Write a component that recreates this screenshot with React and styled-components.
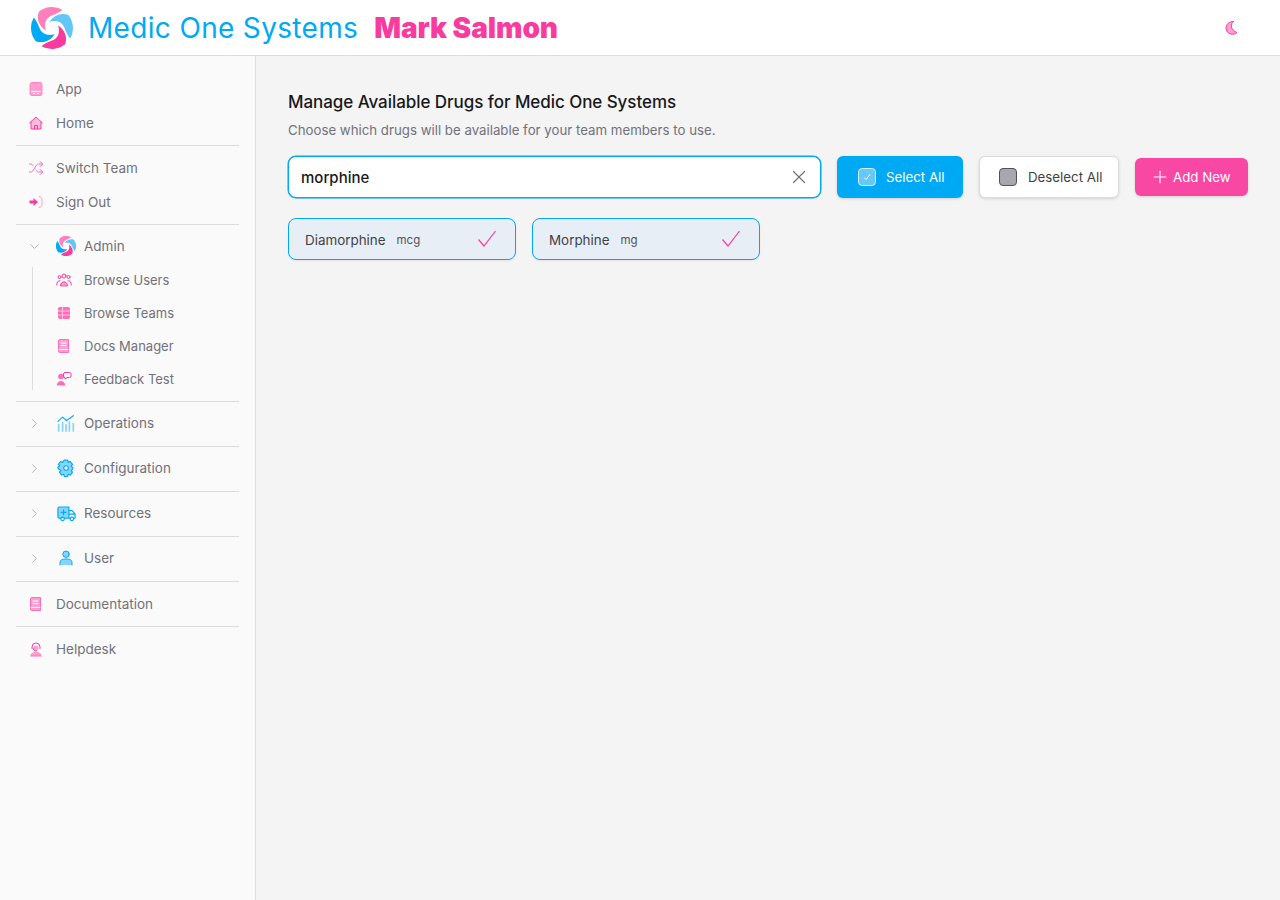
import { useState } from "react";
import styled, { createGlobalStyle } from "styled-components";
import { ChevronDown, ChevronRight, Plus, Shuffle, X } from "lucide-react";

const PINK = "#f93ba0";
const PINK_SOFT = "#ff9fcf";
const BLUE = "#00a9f4";
const BLUE_SOFT = "#86d4fa";

const GlobalStyle = createGlobalStyle`
  * { box-sizing: border-box; }
  html, body { margin: 0; height: 100%; }
  body {
    font-family: Inter, "Noto Sans", "Liberation Sans", sans-serif;
    background: #f4f4f5;
    color: #18181b;
  }
`;

const Swirl = ({ size }) => (
  <svg width={size} height={size} viewBox="0 0 48 48">
    {[
      ["#ff7fbd", 0],
      ["#62c6f8", 90],
      [PINK, 180],
      [BLUE, 270],
    ].map(([fill, angle]) => (
      <path
        key={angle}
        fill={fill}
        transform={`rotate(${angle} 24 24)`}
        d="M36 3.200A24 24 0 0 0 9 5.300C6 13 9 22 17 27 14.500 19 17 12 24.500 9.500 28.500 8 33 6 36 3.200Z"
      />
    ))}
  </svg>
);

const Glyph = styled.svg.attrs({ viewBox: "0 0 16 16", fill: "none" })`
  width: ${(p) => p.$size || 16}px;
  height: ${(p) => p.$size || 16}px;
  flex: none;
  color: ${(p) => (p.$blue ? BLUE : PINK)};
  .soft { fill: ${(p) => (p.$blue ? BLUE_SOFT : PINK_SOFT)}; }
  .strong { fill: #ff6db8; }
  .line { stroke: currentColor; stroke-width: 1; stroke-linecap: round; stroke-linejoin: round; }
  .white { stroke: #fff; stroke-width: 1; stroke-linecap: round; }
  .pale { stroke: #ffc4e2; stroke-width: 1; }
  .solid { fill: currentColor; }
`;

const ShuffleGlyph = styled(Shuffle)`
  flex: none;
  color: #fb5cb0;
`;

const AppIcon = () => (
  <Glyph>
    <rect className="soft" x="2" y="1.500" width="12" height="13" rx="2" />
    <path className="white" d="M2.500 10.500h11M5.500 12.500h1M9.500 12.500h1" />
    <rect x="2" y="1.500" width="12" height="13" rx="2" stroke="#ff84c3" />
  </Glyph>
);

const HomeIcon = () => (
  <Glyph>
    <path className="soft" d="M3 7 8 2.500 13 7v7H3Z" opacity=".7" />
    <path className="line" d="M1.500 8 8 2l6.500 6M3 7v7h10V7M6.500 14v-3.500h3V14" />
  </Glyph>
);

const SignOutIcon = () => (
  <Glyph>
    <path className="solid" d="M1.500 6.500h4V4l4.500 4-4.500 4V9.500h-4Z" />
    <path d="M10.500 2.500c2 .3 3.500 1 3.500 2.500v6c0 1.500-1.500 2.200-3.500 2.500" stroke={PINK_SOFT} />
  </Glyph>
);

const UsersIcon = () => (
  <Glyph>
    <circle className="line" cx="8" cy="4" r="2" />
    <circle className="line" cx="3.500" cy="5" r="1.500" />
    <circle className="line" cx="12.500" cy="5" r="1.500" />
    <path className="soft" d="M4.500 13.500c0-5 7-5 7 0Z" />
    <path className="line" d="M4.500 13.500c0-5 7-5 7 0ZM.7 13c0-3 1.300-4.500 3.300-4.200M15.300 13c0-3-1.300-4.500-3.300-4.200" />
  </Glyph>
);

const TeamsIcon = () => (
  <Glyph>
    <rect className="strong" x="2" y="2" width="12" height="12" rx="2" />
    <path className="pale" d="M2 6h12M2 10h12M6.500 2v12" />
  </Glyph>
);

const BookIcon = () => (
  <Glyph>
    <path className="soft" d="M4 1.500h8.500v13H4a1.500 1.500 0 0 1-1.500-1.500V3A1.500 1.500 0 0 1 4 1.500Z" />
    <path d="M2.500 12.500V3A1.500 1.500 0 0 1 4 1.500h8.500v13H4a1.500 1.500 0 0 1-1.500-1.500Z" stroke="#ff6db8" />
    <path className="white" d="M5 5h5M5 7.500h5M3 11.500h9" />
  </Glyph>
);

const FeedbackIcon = () => (
  <Glyph>
    <circle className="strong" cx="5" cy="5.500" r="2.800" />
    <path className="strong" d="M.8 14.500c0-6 8.400-6 8.400 0Z" />
    <path className="line" stroke="#ff6db8" d="M9 1.500h4.500A1.500 1.500 0 0 1 15 3v2a1.500 1.500 0 0 1-1.500 1.500H11l-2 1.500V6.500A1.500 1.500 0 0 1 7.500 5V3A1.500 1.500 0 0 1 9 1.500Z" />
  </Glyph>
);

const OperationsIcon = () => (
  <Glyph $blue $size={18}>
    <path d="M1.500 15V9.500M5 15V7.500M8 15V9.500M11 15V7M14.500 15V8.500" stroke={BLUE_SOFT} strokeWidth="1.500" strokeLinecap="round" />
    <path className="line" stroke="#4fc0f7" d="M.8 6.500 5 2.800l3.500 3L14.500 1.500" />
  </Glyph>
);

const GearIcon = () => (
  <Glyph $blue $size={18}>
    <path
      className="soft"
      d="M6.500 1h3l.5 2 1.800-.8 2 2.600-1.300 1.500 1.500 1.200v1.500l-1.500 1.200 1.300 1.500-2 2.600-1.800-.8-.5 2h-3l-.5-2-1.800.8-2-2.600 1.300-1.500L.9 8.500V7L2.500 6 1.200 4.800l2-2.600L5 3Z"
    />
    <path
      className="line"
      d="M6.500 1h3l.5 2 1.800-.8 2 2.600-1.300 1.500 1.500 1.200v1.500l-1.500 1.200 1.300 1.500-2 2.600-1.800-.8-.5 2h-3l-.5-2-1.800.8-2-2.600 1.300-1.500L.9 8.500V7L2.500 6 1.200 4.800l2-2.600L5 3Z"
    />
    <circle cx="8" cy="8" r="2" fill="#fafafa" stroke={BLUE} />
  </Glyph>
);

const AmbulanceIcon = () => (
  <Glyph $blue $size={19}>
    <path className="soft" d="M2 2.500h8v9.500H2a1.200 1.200 0 0 1-1.200-1.200V3.700A1.200 1.200 0 0 1 2 2.500Z" />
    <path className="line" d="M3 12H2a1.200 1.200 0 0 1-1.200-1.200V3.700A1.200 1.200 0 0 1 2 2.500h8V12H6.500M10 5.500h2.800l2.400 3V12h-1M11 12h-1M10 8.500h5" />
    <circle className="line" cx="4.700" cy="12.500" r="1.500" />
    <circle className="line" cx="12.500" cy="12.500" r="1.500" />
    <path className="line" d="M5.500 5v4M3.500 7h4" />
  </Glyph>
);

const UserIcon = () => (
  <Glyph $blue>
    <circle className="soft" cx="8" cy="4.200" r="3.200" />
    <circle className="line" cx="8" cy="4.200" r="3.200" />
    <path className="soft" d="M2 15v-2.500C2 10 4 9 8 9s6 1 6 3.500V15Z" />
    <path className="line" d="M2 15v-2.500C2 10 4 9 8 9s6 1 6 3.500V15" />
  </Glyph>
);

const HelpIcon = () => (
  <Glyph>
    <path className="line" d="M4 7.500V6a4 4 0 0 1 8 0v1.500" />
    <circle className="soft" cx="8" cy="7" r="2.500" />
    <path className="line" d="M5 7c0 2 1.500 3 3.500 3" />
    <path className="soft" d="M2.500 15c0-3 2-4 5.500-4s5.500 1 5.500 4Z" />
    <path d="M2.500 15h11" stroke="#ff6db8" />
  </Glyph>
);

const MoonIcon = () => (
  <Glyph>
    <path
      className="soft"
      d="M9.500 1.500C6.300 3.500 6 10 13 12.500 10 15.500 3 15 2 8.500 1.700 4.500 5.500 1.200 9.500 1.500Z"
    />
    <path
      className="line"
      stroke="#ff6db8"
      d="M9.500 1.500C6.300 3.500 6 10 13 12.500 10 15.500 3 15 2 8.500 1.700 4.500 5.500 1.200 9.500 1.500Z"
    />
  </Glyph>
);

const Page = styled.div`
  min-height: 900px;
  display: flex;
  flex-direction: column;
`;

const TopBar = styled.header`
  height: 56px;
  flex: none;
  background: #fff;
  border-bottom: 1px solid #dedede;
  display: flex;
  align-items: center;
  padding: 0 40px 0 31px;
`;

const Brand = styled.div`
  margin-left: 15px;
  font-size: 28px;
  letter-spacing: 0.33px;
  color: ${BLUE};
`;

const Person = styled.div`
  margin-left: 16px;
  font-size: 28px;
  font-weight: 900;
  letter-spacing: -0.05px;
  color: ${PINK};
`;

const ThemeToggle = styled.button`
  margin-left: auto;
  border: 0;
  padding: 0;
  background: none;
  display: flex;
`;

const Body = styled.div`
  flex: 1;
  display: flex;
`;

const Sidebar = styled.nav`
  width: 256px;
  flex: none;
  padding: 16px 16px 0;
  background: #fafafa;
  border-right: 1px solid #dedede;
`;

const Divider = styled.hr`
  margin: 5px 0;
  border: 0;
  border-top: 1px solid #dcdcdc;
`;

const Row = styled.a`
  height: ${(p) => (p.$sub ? 33 : 34)}px;
  display: flex;
  align-items: center;
  padding-left: ${(p) => (p.$sub ? 40 : p.$group ? 11 : 12)}px;
  padding-bottom: ${(p) => (p.$sub || p.$group ? 2 : 0)}px;
  font-size: ${(p) => (p.$sub ? 13 : 13.5)}px;
  color: #71717a;
`;

const RowIcon = styled.span`
  width: ${(p) => (p.$wide ? 20 : 16)}px;
  display: flex;
  justify-content: center;
  margin-right: ${(p) => (p.$wide ? 8 : 12)}px;
`;

const Caret = styled.span`
  width: 15px;
  display: flex;
  justify-content: center;
  margin-right: 14px;
  color: #a1a1aa;
`;

const SubList = styled.div`
  position: relative;
  &::before {
    content: "";
    position: absolute;
    left: 16px;
    top: 3px;
    bottom: 6px;
    border-left: 1px solid #dcdcdc;
  }
`;

const Main = styled.main`
  flex: 1;
  min-width: 0;
  padding: 32px;
`;

const Heading = styled.h1`
  margin: 4px 0 0;
  font-size: 17px;
  line-height: 20px;
  font-weight: 500;
  letter-spacing: -0.06px;
  color: #18181b;
`;

const Sub = styled.p`
  margin: 8px 0 0;
  font-size: 13.25px;
  line-height: 20px;
  color: #71717a;
`;

const Toolbar = styled.div`
  margin-top: 16px;
  display: flex;
  align-items: center;
  gap: 16px;
`;

const SearchBox = styled.label`
  flex: 1;
  height: 42px;
  display: flex;
  align-items: center;
  padding: 0 10px 0 12px;
  background: #fff;
  border: 1px solid ${BLUE};
  border-radius: 8px;
  box-shadow: 0 0 0 0.5px ${BLUE}, 0 1px 2px rgba(0, 0, 0, 0.08);
`;

const SearchInput = styled.input`
  flex: 1;
  min-width: 0;
  border: 0;
  outline: 0;
  padding: 0;
  background: none;
  font: 500 15px Inter, sans-serif;
  color: #18181b;
`;

const ClearButton = styled.span`
  display: flex;
  color: #71717a;
`;

const Action = styled.button`
  width: ${(p) => p.$width}px;
  height: ${(p) => p.$height || 42}px;
  flex: none;
  display: flex;
  align-items: center;
  gap: ${(p) => p.$gap}px;
  padding: 0 0 0 ${(p) => p.$pad}px;
  font: 400 13.3px Inter, sans-serif;
  color: ${(p) => p.$color || "#fff"};
  background: ${(p) => p.$bg};
  border: ${(p) => (p.$outlined ? "1px solid #dcdcdc" : "0")};
  border-radius: 6px;
  box-shadow: 0 1px 3px rgba(0, 0, 0, 0.14);
`;

const Tick = styled.span`
  width: 18px;
  height: 18px;
  display: flex;
  align-items: center;
  justify-content: center;
  border-radius: 4px;
  border: 1.500px solid #cdeefd;
  background: #66c8f8;
  color: #fff;
`;

const Empty = styled.span`
  width: 18px;
  height: 18px;
  border-radius: 4px;
  border: 1.500px solid #52525b;
  background: #a8a8ac;
`;

const Cards = styled.div`
  margin-top: 20px;
  display: flex;
  gap: 16px;
`;

const Card = styled.div`
  width: 228px;
  height: 42px;
  display: flex;
  align-items: center;
  padding: 1px 18px 0 16px;
  background: #e8eef6;
  border: 1px solid ${BLUE};
  border-radius: 8px;
  box-shadow: 0 1px 2px rgba(0, 0, 0, 0.08);
`;

const DrugName = styled.span`
  font-size: 13.4px;
  color: #3f3f46;
`;

const DrugUnit = styled.span`
  margin-left: 11px;
  margin-top: 1px;
  font-size: 11.500px;
  color: #52525b;
`;

const CheckMark = styled.svg`
  margin-left: auto;
  margin-top: -1px;
`;

const Check = () => (
  <CheckMark width="20" height="18" viewBox="0 0 20 18" fill="none">
    <path d="M1.500 9.500 7 16 18.500 1" stroke={PINK} strokeWidth="1.200" />
  </CheckMark>
);

const navTop = [
  { id: "app", text: "App", icon: <AppIcon /> },
  { id: "home", text: "Home", icon: <HomeIcon /> },
];
const navTeam = [
  { id: "switch", text: "Switch Team", icon: <ShuffleGlyph size={16} strokeWidth={1.300} /> },
  { id: "out", text: "Sign Out", icon: <SignOutIcon /> },
];
const adminLinks = [
  { id: "users", text: "Browse Users", icon: <UsersIcon /> },
  { id: "teams", text: "Browse Teams", icon: <TeamsIcon /> },
  { id: "docs", text: "Docs Manager", icon: <BookIcon /> },
  { id: "feedback", text: "Feedback Test", icon: <FeedbackIcon /> },
];
const groups = [
  { id: "ops", text: "Operations", icon: <OperationsIcon /> },
  { id: "config", text: "Configuration", icon: <GearIcon /> },
  { id: "res", text: "Resources", icon: <AmbulanceIcon /> },
  { id: "user", text: "User", icon: <UserIcon /> },
];
const drugs = [
  { id: 1, name: "Diamorphine", unit: "mcg" },
  { id: 2, name: "Morphine", unit: "mg" },
];

const NavRow = ({ text, icon }) => (
  <Row>
    <RowIcon>{icon}</RowIcon>
    {text}
  </Row>
);

const App = () => {
  const [query, setQuery] = useState("morphine");

  return (
    <Page>
      <GlobalStyle />
      <TopBar>
        <Swirl size={42} />
        <Brand>Medic One Systems</Brand>
        <Person>Mark Salmon</Person>
        <ThemeToggle>
          <MoonIcon />
        </ThemeToggle>
      </TopBar>
      <Body>
        <Sidebar>
          {navTop.map(({ id, text, icon }) => (
            <NavRow key={id} text={text} icon={icon} />
          ))}
          <Divider />
          {navTeam.map(({ id, text, icon }) => (
            <NavRow key={id} text={text} icon={icon} />
          ))}
          <Divider />
          <Row $group>
            <Caret>
              <ChevronDown size={15} strokeWidth={1.300} />
            </Caret>
            <RowIcon $wide>
              <Swirl size={20} />
            </RowIcon>
            Admin
          </Row>
          <SubList>
            {adminLinks.map(({ id, text, icon }) => (
              <Row $sub key={id}>
                <RowIcon>{icon}</RowIcon>
                {text}
              </Row>
            ))}
          </SubList>
          {groups.map(({ id, text, icon }) => (
            <div key={id}>
              <Divider />
              <Row $group>
                <Caret>
                  <ChevronRight size={15} strokeWidth={1.300} />
                </Caret>
                <RowIcon $wide>{icon}</RowIcon>
                {text}
              </Row>
            </div>
          ))}
          <Divider />
          <NavRow text="Documentation" icon={<BookIcon />} />
          <Divider />
          <NavRow text="Helpdesk" icon={<HelpIcon />} />
        </Sidebar>
        <Main>
          <Heading>Manage Available Drugs for Medic One Systems</Heading>
          <Sub>Choose which drugs will be available for your team members to use.</Sub>
          <Toolbar>
            <SearchBox>
              <SearchInput value={query} onChange={(e) => setQuery(e.target.value)} />
              <ClearButton>
                <X size={22} strokeWidth={1.300} />
              </ClearButton>
            </SearchBox>
            <Action $width={126} $bg={BLUE} $pad={21} $gap={10}>
              <Tick>
                <svg width="8" height="8" viewBox="0 0 8 8" fill="none">
                  <path d="M1 4.500 3 6.500 7 1.500" stroke="#fff" strokeWidth="1" />
                </svg>
              </Tick>
              Select All
            </Action>
            <Action $width={140} $bg="#fff" $color="#3f3f46" $outlined $pad={19} $gap={11}>
              <Empty />
              Deselect All
            </Action>
            <Action $width={113} $height={38} $bg="#f848a4" $pad={15} $gap={3}>
              <Plus size={20} strokeWidth={1.300} />
              Add New
            </Action>
          </Toolbar>
          <Cards>
            {drugs.map(({ id, name, unit }) => (
              <Card key={id}>
                <DrugName>{name}</DrugName>
                <DrugUnit>{unit}</DrugUnit>
                <Check />
              </Card>
            ))}
          </Cards>
        </Main>
      </Body>
    </Page>
  );
};

export default App;
